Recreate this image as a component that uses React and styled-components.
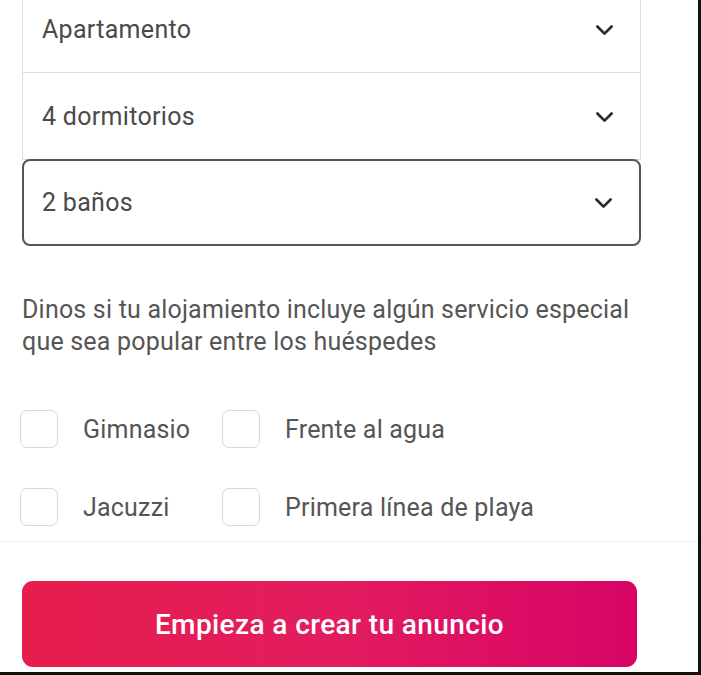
import React from 'react';
import styled, { createGlobalStyle } from 'styled-components';

const GlobalStyle = createGlobalStyle`
    html, body {
        margin: 0;
        padding: 0;
        background: #fff;
    }
    body {
        font-family: Roboto, "Liberation Sans", sans-serif;
        color: #4a4a4a;
    }
`;

const Chevron = () => (
    <svg width="19" height="19" viewBox="0 0 32 32" fill="none">
        <path d="M4 11l12 12 12-12" stroke="#2b2b2b" strokeWidth="4.5" strokeLinecap="round" strokeLinejoin="round" />
    </svg>
);

const selects = ['Apartamento', '4 dormitorios', '2 baños'];
const amenities = ['Gimnasio', 'Frente al agua', 'Jacuzzi', 'Primera línea de playa'];

const App = () => {
    return (
        <>
            <GlobalStyle />
            <Frame>
                <Content>
                    <SelectGroup>
                        {selects.map((label, i) => (
                            <SelectRow key={label} $focused={i === selects.length - 1}>
                                <span>{label}</span>
                                <Chevron />
                            </SelectRow>
                        ))}
                    </SelectGroup>

                    <Intro>
                        Dinos si tu alojamiento incluye algún servicio especial
                        que sea popular entre los huéspedes
                    </Intro>

                    <AmenityGrid>
                        {amenities.map((name) => (
                            <Amenity key={name}>
                                <Box />
                                <span>{name}</span>
                            </Amenity>
                        ))}
                    </AmenityGrid>
                </Content>

                <Footer>
                    <CreateButton>Empieza a crear tu anuncio</CreateButton>
                </Footer>
            </Frame>
        </>
    );
};

const Frame = styled.div`
    width: 701px;
    height: 675px;
    box-sizing: border-box;
    border-right: 3px solid #111;
    border-bottom: 3px solid #111;
    overflow: hidden;
    display: flex;
    flex-direction: column;
`;

const Content = styled.div`
    padding: 0 57px 0 22px;
    border-bottom: 1px solid #f0f0f0;
`;

const SelectGroup = styled.div`
    margin-top: -14px;
    display: flex;
    flex-direction: column;
`;

const SelectRow = styled.div`
    height: 87px;
    box-sizing: border-box;
    display: flex;
    align-items: center;
    justify-content: space-between;
    padding: 0 26px 0 ${({ $focused }) => ($focused ? '18px' : '19px')};
    font-size: 25px;
    letter-spacing: 0.3px;
    color: #4a4a4a;
    border-left: 1px solid #dcdcdc;
    border-right: 1px solid #dcdcdc;
    border-bottom: 1px solid #dcdcdc;

    ${({ $focused }) => $focused && `
        border: 2px solid #555;
        border-radius: 8px;
        margin-top: -1px;
    `}
`;

const Intro = styled.p`
    margin: 48px 0 0;
    max-width: 610px;
    font-size: 25px;
    line-height: 32px;
    letter-spacing: 0.2px;
    color: #555;
`;

const AmenityGrid = styled.div`
    display: grid;
    grid-template-columns: 202px auto;
    row-gap: 40px;
    margin: 52px 0 15px -2px;
`;

const Amenity = styled.label`
    display: flex;
    align-items: center;
    gap: 25px;
    font-size: 25px;
    letter-spacing: 0.2px;
    color: #555;
`;

const Box = styled.span`
    flex-shrink: 0;
    width: 38px;
    height: 38px;
    box-sizing: border-box;
    border: 1.5px solid #d8d8d8;
    border-radius: 7px;
`;

const Footer = styled.div`
    padding: 39px 0 0 22px;
`;

const CreateButton = styled.button`
    width: 615px;
    height: 86px;
    border: none;
    border-radius: 11px;
    background: linear-gradient(to right, #e61e4d 0%, #e31c5f 50%, #d70466 100%);
    color: #fff;
    font-family: Roboto, "Liberation Sans", sans-serif;
    font-size: 28px;
    font-weight: 500;
    letter-spacing: 0.4px;
    cursor: pointer;
`;

export default App;
